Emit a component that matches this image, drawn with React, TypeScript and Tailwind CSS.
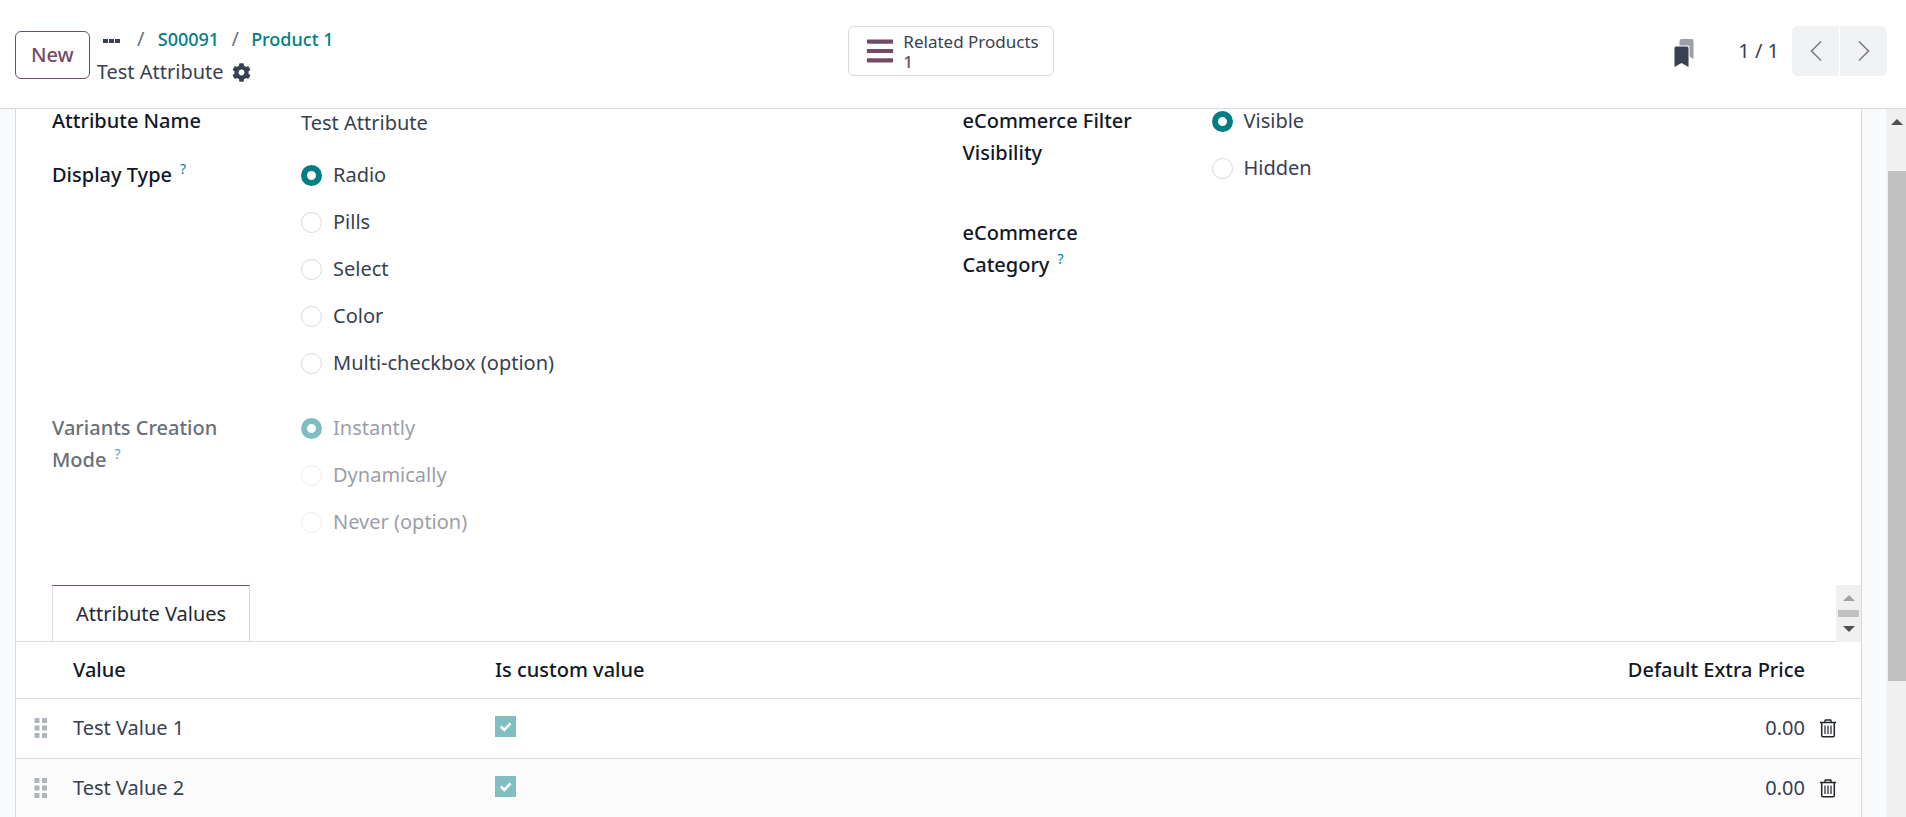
import { useState } from "react";
import type { ReactNode } from "react";
import { FaBars, FaCog } from "react-icons/fa";

const DISPLAY_TYPES = ["Radio", "Pills", "Select", "Color", "Multi-checkbox (option)"];
const CREATION_MODES = ["Instantly", "Dynamically", "Never (option)"];
const VISIBILITY = ["Visible", "Hidden"];

const VALUES = [
  { id: 1, name: "Test Value 1", custom: true, price: "0.00" },
  { id: 2, name: "Test Value 2", custom: true, price: "0.00" },
];

function Help({ muted }: { muted: boolean }) {
  return (
    <sup className={`static ml-2 align-super text-sm leading-none font-normal ${muted ? "text-[#4fa9c4]" : "text-[#017e9f]"}`}>
      ?
    </sup>
  );
}

function RadioGroup({
  name,
  options,
  disabled = false,
}: {
  name: string;
  options: string[];
  disabled?: boolean;
}) {
  const [selected, setSelected] = useState(options[0]);

  return (
    <div role="radiogroup" aria-label={name} className={`flex flex-col gap-[15px] pb-[15px] ${disabled ? "opacity-50" : ""}`}>
      {options.map((option) => (
        <label key={option} className="flex h-8 items-center gap-[11px]">
          <input
            type="radio"
            name={name}
            disabled={disabled}
            checked={selected === option}
            onChange={() => setSelected(option)}
            className="size-[21px] shrink-0 appearance-none rounded-full border border-[#d8dadd] bg-white checked:border-[6px] checked:border-[#017e84]"
          />
          {option}
        </label>
      ))}
    </div>
  );
}

function Field({
  label,
  muted = false,
  help = false,
  children,
}: {
  label: string;
  muted?: boolean;
  help?: boolean;
  children?: ReactNode;
}) {
  return (
    <div className="flex">
      <div className={`w-[249px] shrink-0 pr-16 leading-8 font-medium ${muted ? "text-[#6a6f78]" : "text-[#111827]"}`}>
        {label}
        {help && <Help muted={muted} />}
      </div>
      <div className="min-w-0 flex-1">{children}</div>
    </div>
  );
}

function BookmarkIcon() {
  return (
    <svg viewBox="0 0 20 28" className="h-7 w-5" aria-hidden="true">
      <path d="M7.500 0H18Q19.500 0 19.500 1.500V20L15.500 17.500V8Q15.500 6.500 14 6.500H5.500V2Q5.500 0 7.500 0Z" fill="#9ca0aa" />
      <path d="M2 7.500H13Q14.500 7.500 14.500 9V28L7.500 24L0.500 28V9Q0.500 7.500 2 7.500Z" fill="#374151" />
    </svg>
  );
}

function TrashIcon() {
  return (
    <svg viewBox="0 0 16 19" className="h-[19px] w-4" fill="none" stroke="#212529" aria-hidden="true">
      <path d="M0 3.500H16" strokeWidth="1.500" />
      <path d="M5 3.500V1.500Q5 1 5.500 1H10.500Q11 1 11 1.500V3.500" strokeWidth="1.400" />
      <path d="M1.700 4V16.500Q1.700 17.700 3 17.700H13Q14.300 17.700 14.300 16.500V4" strokeWidth="1.500" />
      <path d="M5 6.500V15M8 6.500V15M11 6.500V15" strokeWidth="1.200" />
    </svg>
  );
}

function HandleIcon() {
  return (
    <svg viewBox="0 0 14 20" className="h-5 w-[14px]" fill="#adb5bd" aria-hidden="true">
      {[0, 7.5, 15].map((y) => (
        <g key={y}>
          <rect x="0.500" y={y} width="5" height="5" rx="0.500" />
          <rect x="8" y={y} width="5" height="5" rx="0.500" />
        </g>
      ))}
    </svg>
  );
}

function Arrow({ up = false, color }: { up?: boolean; color: string }) {
  return (
    <svg viewBox="0 0 12 6" className="h-[6px] w-3" aria-hidden="true">
      <path d={up ? "M0 6L6 0L12 6Z" : "M0 0L6 6L12 0Z"} fill={color} />
    </svg>
  );
}

function ControlPanel() {
  return (
    <header className="grid h-[109px] shrink-0 grid-cols-[1fr_auto_1fr] items-start border-b border-[#d8dadd] pr-[19px] pl-[15px]">
      <div className="flex items-start gap-[7px]">
        <button className="mt-[31px] h-12 rounded-md border border-[#714b67] px-[15px] font-medium text-[#714b67]">
          New
        </button>
        <div className="pt-[23px]">
          <nav className="flex h-8 items-center text-lg font-medium">
            <button aria-label="More" className="mt-1 ml-[6px] flex gap-px">
              <span className="h-1 w-[5px] bg-[#374151]" />
              <span className="h-1 w-[5px] bg-[#374151]" />
              <span className="h-1 w-[5px] bg-[#374151]" />
            </button>
            <span className="w-[38px] pl-1 text-center text-xl font-normal text-[#6b7280]">/</span>
            <a href="#" className="text-[#017e84]">S00091</a>
            <span className="w-8 text-center text-xl font-normal text-[#6b7280]">/</span>
            <a href="#" className="text-[#017e84]">Product 1</a>
          </nav>
          <div className="mt-px flex h-8 items-center gap-2">
            <span>Test Attribute</span>
            <button aria-label="Actions">
              <FaCog className="size-[19px]" />
            </button>
          </div>
        </div>
      </div>

      <button className="mt-[26px] flex h-[50px] items-center gap-2 rounded-md border border-[#d8dadd] pr-[14px] pl-4 text-left">
        <FaBars className="size-[30px] text-[#714b67]" />
        <span className="flex flex-col pt-[2px] text-[17px] leading-5">
          <span>Related Products</span>
          <span className="font-medium text-[#714b67]">1</span>
        </span>
      </button>

      <div className="mt-[26px] flex h-[50px] items-center justify-end">
        <button aria-label="Bookmarks" className="mt-1 mr-[44px]">
          <BookmarkIcon />
        </button>
        <span className="mr-[13px]">1 / 1</span>
        <div className="flex gap-px">
          <button aria-label="Previous" className="flex h-[50px] w-[47px] items-center justify-center rounded-l-md bg-[#f1f2f4]">
            <svg viewBox="0 0 12 20" className="h-5 w-3" fill="none" stroke="#7c7c7c" strokeWidth="1.500">
              <path d="M11 0.500L1.500 10L11 19.500" />
            </svg>
          </button>
          <button aria-label="Next" className="flex h-[50px] w-[47px] items-center justify-center rounded-r-md bg-[#f1f2f4]">
            <svg viewBox="0 0 12 20" className="h-5 w-3" fill="none" stroke="#7c7c7c" strokeWidth="1.500">
              <path d="M1 0.500L10.500 10L1 19.500" />
            </svg>
          </button>
        </div>
      </div>
    </header>
  );
}

function ValuesTable() {
  return (
    <table className="w-full table-fixed text-left">
      <thead>
        <tr className="h-14 border-b border-[#d8dadd] text-[#111827]">
          <th className="w-[57px]" />
          <th className="w-[422px] font-medium">Value</th>
          <th className="font-medium">Is custom value</th>
          <th className="text-right font-medium">Default Extra Price</th>
          <th className="w-14" />
        </tr>
      </thead>
      <tbody>
        {VALUES.map((value) => (
          <tr key={value.id} className="h-[60px] border-b border-[#d8dadd] even:bg-[#fcfcfc]">
            <td className="pl-[18px]">
              <HandleIcon />
            </td>
            <td>{value.name}</td>
            <td className="pb-1">
              <span className="relative flex size-[21px]">
                <input
                  type="checkbox"
                  aria-label={`${value.name} is custom`}
                  defaultChecked={value.custom}
                  disabled
                  className="size-[21px] appearance-none border border-[#d8dadd] checked:border-0 checked:bg-[#80bec1]"
                />
                <svg viewBox="0 0 21 21" className="pointer-events-none absolute inset-0" fill="none" stroke="#fff" strokeWidth="2.600">
                  <path d="M5.800 10.500L9.300 13.800L15.500 7.300" />
                </svg>
              </span>
            </td>
            <td className="text-right">{value.price}</td>
            <td className="pl-[15px]">
              <button aria-label="Delete row" className="flex">
                <TrashIcon />
              </button>
            </td>
          </tr>
        ))}
      </tbody>
    </table>
  );
}

export default function App() {
  return (
    <div className="flex h-screen flex-col overflow-hidden bg-white font-['Noto_Sans',sans-serif] text-[20px] leading-8 text-[#374151]">
      <ControlPanel />

      <div className="flex min-h-0 flex-1 bg-[#f9fafb]">
        <main className="min-w-0 flex-1 overflow-hidden pr-6 pl-[15px]">
          <div className="-mt-1 min-h-screen border-x border-[#d8dadd] bg-white">
            <div className="grid grid-cols-2 gap-x-12 px-9">
              <div className="flex flex-col gap-[18px]">
                <Field label="Attribute Name">
                  <input
                    aria-label="Attribute Name"
                    defaultValue="Test Attribute"
                    className="block h-9 w-full bg-transparent pb-[2px] outline-none"
                  />
                </Field>
                <Field label="Display Type" help>
                  <RadioGroup name="Display Type" options={DISPLAY_TYPES} />
                </Field>
                <Field label="Variants Creation Mode" muted help>
                  <RadioGroup name="Variants Creation Mode" options={CREATION_MODES} disabled />
                </Field>
              </div>
              <div className="flex flex-col gap-[18px]">
                <Field label="eCommerce Filter Visibility">
                  <RadioGroup name="eCommerce Filter Visibility" options={VISIBILITY} />
                </Field>
                <Field label="eCommerce Category" help />
              </div>
            </div>

            <div className="mt-8 flex items-end justify-between border-b border-[#d8dadd] pl-9">
              <button className="h-14 border-x border-t border-x-[#d8dadd] border-t-[#714b67] bg-white px-[23px] text-[#1f2937]">
                Attribute Values
              </button>
              <div className="-mb-px flex h-[57px] w-[25px] flex-col items-center justify-between bg-[#f0f0f0] py-[10px]">
                <Arrow up color="#a3a3a3" />
                <div className="h-[7px] w-[21px] bg-[#c1c1c1]" />
                <Arrow color="#505050" />
              </div>
            </div>

            <ValuesTable />
          </div>
        </main>

        <div className="flex w-5 flex-col items-end overflow-hidden bg-[#f0f0f0] pt-[10px]">
          <div className="flex w-[18px] justify-center pr-px">
            <Arrow up color="#505050" />
          </div>
          <div className="mt-[46px] h-[73%] w-[18px] bg-[#c1c1c1]" />
        </div>
      </div>
    </div>
  );
}
